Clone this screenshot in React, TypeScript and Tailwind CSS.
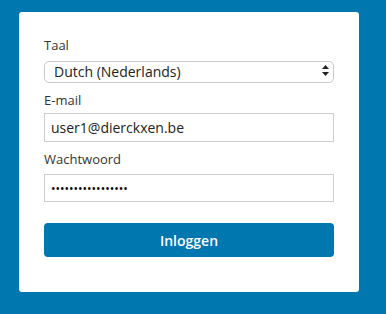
export default function App() {
  return (
    <div className="min-h-screen w-full bg-[#0077ae] pt-3 pl-[19px] font-['Open_Sans',sans-serif]">
      <div className="w-[340px] h-[280px] bg-white rounded-[3px] px-[25px] pt-[24px]">
        <label className="block text-[13px] leading-[18px] text-[#333]">Taal</label>
        <div className="relative mt-[5px] h-[22px] w-[290px]">
          <select
            defaultValue="nl"
            className="appearance-none w-full h-full rounded-[5px] border border-[#c9c9c9] bg-white pl-[9px] text-[14px] leading-[20px] text-[#222] outline-none"
          >
            <option value="nl">Dutch (Nederlands)</option>
          </select>
          <svg className="pointer-events-none absolute right-[5px] top-[6px]" width="7" height="11" viewBox="0 0 7 11">
            <path d="M3.5 0 L7 4 H0 Z" fill="#222" />
            <path d="M0 7 H7 L3.5 11 Z" fill="#222" />
          </svg>
        </div>

        <label className="mt-[10px] block text-[13px] leading-[18px] text-[#333]">E-mail</label>
        <input
          type="text"
          defaultValue="user1@dierckxen.be"
          className="mt-[4px] block h-[29px] w-[290px] border border-[#cccccc] px-[6px] text-[14px] text-[#222] outline-none"
        />

        <label className="mt-[8px] block text-[13px] leading-[18px] text-[#333]">Wachtwoord</label>
        <input
          type="password"
          defaultValue="aaaaaaaaaaaaaaaaa"
          className="mt-[6px] block h-[28px] w-[290px] border border-[#cccccc] px-[6px] text-[12px] text-[#000] outline-none"
        />

        <button className="mt-[21px] block h-[34px] w-[290px] rounded-[4px] bg-[#0077ae] text-[14px] font-semibold text-white">
          Inloggen
        </button>
      </div>
    </div>
  );
}
